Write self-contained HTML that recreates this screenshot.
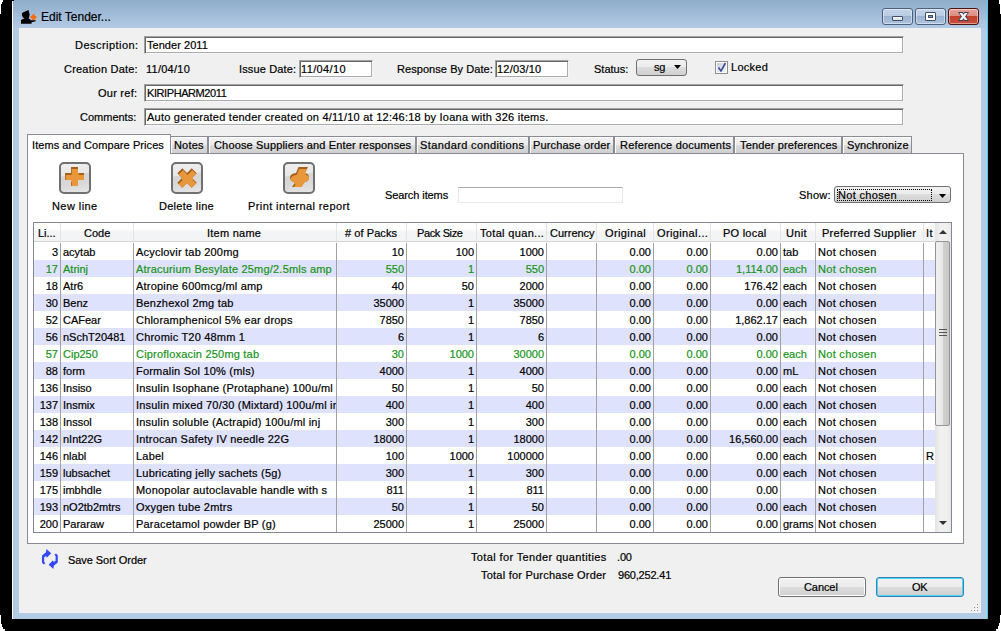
<!DOCTYPE html><html><head><meta charset="utf-8"><style>
html,body{margin:0;padding:0;}
body{width:1001px;height:631px;overflow:hidden;background:#000;position:relative;font-family:"Liberation Sans",sans-serif;}
.t{position:absolute;white-space:nowrap;}
.r{position:absolute;box-sizing:border-box;}
.in{position:absolute;box-sizing:border-box;background:#fff;border:1px solid;border-color:#a0a0a0 #f4f6fb #f4f6fb #a0a0a0;box-shadow:inset 1px 1px 0 #696969, inset -1px -1px 0 #ababab;}
.t{-webkit-text-stroke:0.2px currentColor;}
</style></head><body>

<div class="r" style="left:0px;top:0px;width:3px;height:2px;background:#fff"></div>
<div class="r" style="left:0px;top:2px;width:2px;height:2px;background:#fff"></div>
<div class="r" style="left:0px;top:4px;width:1px;height:10px;background:#fff"></div>
<div class="r" style="left:999px;top:0px;width:2px;height:4px;background:#fff"></div>
<div class="r" style="left:1000px;top:4px;width:1px;height:10px;background:#fff"></div>
<div class="r" style="left:0px;top:615px;width:1px;height:9px;background:#fff"></div>
<div class="r" style="left:0px;top:624px;width:2px;height:3px;background:#fff"></div>
<div class="r" style="left:0px;top:627px;width:3px;height:2px;background:#fff"></div>
<div class="r" style="left:0px;top:629px;width:5px;height:2px;background:#fff"></div>
<div class="r" style="left:1000px;top:615px;width:1px;height:8px;background:#fff"></div>
<div class="r" style="left:999px;top:623px;width:2px;height:3px;background:#fff"></div>
<div class="r" style="left:998px;top:626px;width:3px;height:3px;background:#fff"></div>
<div class="r" style="left:996px;top:629px;width:5px;height:2px;background:#fff"></div>
<div class="r" style="left:12px;top:1px;width:1px;height:618px;background:#fff"></div>
<div class="r" style="left:13px;top:0px;width:975px;height:619px;background:#b4cbe6"></div>
<div class="r" style="left:13px;top:0px;width:975px;height:28px;background:linear-gradient(#8facca,#b3cae5)"></div>
<div class="r" style="left:987px;top:1px;width:1px;height:618px;background:#3ad0f4"></div>
<div class="r" style="left:13px;top:0px;width:1px;height:1px;background:#000"></div>
<div class="r" style="left:19px;top:28px;width:962px;height:585px;background:#f0f0f0"></div>
<svg style="position:absolute;left:19px;top:8px" width="20" height="18" viewBox="0 0 20 18">
<path d="M3 5 L6 3.5 L9.5 2 L10 4 L10.6 6.5 L10.2 9 L9.6 10.6 L11 11.2 L12 12.3 L16.8 12.2 L16.6 13.3 L12.6 14.2 L12.6 15.8 L2 15.8 L2 12 L4 11 L5.6 10.6 L3.6 9 L3 7 Z" fill="#000"/>
<path d="M13.2 6.3 h2.6 v1.6 h1.6 v2.6 h-1.6 v1.6 h-2.6 v-1.6 h-1.6 v-2.6 h1.6 z" fill="#f86c0c"/>
</svg>
<div class="t" style="left:41px;top:10px;font-size:12px;line-height:14px;letter-spacing:0.0px;color:#000;">Edit Tender...</div>
<div class="r" style="left:882px;top:8px;width:31px;height:17px;background:linear-gradient(#c3d4e8 0%,#b8cce4 45%,#9bb3d1 50%,#adc3de 100%);border:1px solid #4e5f7a;border-radius:3px;box-shadow:inset 0 0 0 1px rgba(255,255,255,.45)"></div>
<div class="r" style="left:915px;top:8px;width:31px;height:17px;background:linear-gradient(#c3d4e8 0%,#b8cce4 45%,#9bb3d1 50%,#adc3de 100%);border:1px solid #4e5f7a;border-radius:3px;box-shadow:inset 0 0 0 1px rgba(255,255,255,.45)"></div>
<div class="r" style="left:948px;top:8px;width:31px;height:17px;background:linear-gradient(#e8a49a 0%,#dd8d82 45%,#c2402c 50%,#c7503c 100%);border:1px solid #4b1313;border-radius:3px;box-shadow:inset 0 0 0 1px rgba(255,255,255,.45)"></div>
<div class="r" style="left:892px;top:16px;width:11px;height:5px;background:linear-gradient(#fafafa,#dcdcdc);border:1px solid #3f4f66;border-radius:1px"></div>
<div class="r" style="left:925px;top:12px;width:11px;height:9px;background:#fff;border:1px solid #3f4f66;border-radius:1px"></div>
<div class="r" style="left:928px;top:15px;width:5px;height:3px;background:#7d9cc6;border:1px solid #3f4f66"></div>
<svg style="position:absolute;left:946px;top:6px" width="35" height="21" viewBox="0 0 35 21">
<path d="M12 6 L16.6 6 L17.5 7.2 L18.4 6 L23 6 L20.2 10.5 L23 15 L18.4 15 L17.5 13.8 L16.6 15 L12 15 L14.8 10.5 Z" fill="#3a3f55"/><path d="M13.3 6.9 L16.2 6.9 L17.5 8.8 L18.8 6.9 L21.7 6.9 L19 10.5 L21.7 14.1 L18.8 14.1 L17.5 12.2 L16.2 14.1 L13.3 14.1 L16 10.5 Z" fill="#f4f4f4"/>
</svg>
<div class="t" style="left:75px;top:39px;font-size:11px;line-height:13px;letter-spacing:0.455px;color:#000;">Description:</div>
<div class="in" style="left:144px;top:36px;width:760px;height:18px"></div>
<div class="t" style="left:147px;top:39px;font-size:11px;line-height:13px;letter-spacing:0.04px;color:#000;">Tender 2011</div>
<div class="t" style="left:64px;top:63px;font-size:11px;line-height:13px;letter-spacing:0.208px;color:#000;">Creation Date:</div>
<div class="t" style="left:146px;top:63px;font-size:11px;line-height:13px;letter-spacing:0.257px;color:#000;">11/04/10</div>
<div class="t" style="left:239px;top:63px;font-size:11px;line-height:13px;letter-spacing:0.15px;color:#000;">Issue Date:</div>
<div class="in" style="left:299px;top:60px;width:74px;height:18px"></div>
<div class="t" style="left:301px;top:63px;font-size:11px;line-height:13px;letter-spacing:0.371px;color:#000;">11/04/10</div>
<div class="t" style="left:397px;top:63px;font-size:11px;line-height:13px;letter-spacing:0.062px;color:#000;">Response By Date:</div>
<div class="in" style="left:495px;top:60px;width:74px;height:18px"></div>
<div class="t" style="left:497px;top:63px;font-size:11px;line-height:13px;letter-spacing:0.2px;color:#000;">12/03/10</div>
<div class="t" style="left:594px;top:63px;font-size:11px;line-height:13px;letter-spacing:0.0px;color:#000;">Status:</div>
<div class="r" style="left:636px;top:59px;width:51px;height:17px;background:linear-gradient(#f2f2f2 0%,#ebebeb 50%,#dddddd 50%,#cfcfcf 100%);border:1px solid #707070;border-radius:3px"></div>
<div class="t" style="left:654px;top:61px;font-size:11px;line-height:13px;letter-spacing:-0.2px;color:#000;">sg</div>
<svg style="position:absolute;left:674px;top:65px" width="8" height="5"><path d="M0 0H7L3.5 4Z" fill="#000"/></svg>
<div class="r" style="left:715px;top:61px;width:13px;height:13px;background:#fff;border:1px solid #8e8f8f"></div>
<div class="r" style="left:717px;top:63px;width:9px;height:9px;background:linear-gradient(135deg,#c9ced9 0%,#dfe2e8 50%,#f3f3f3 100%)"></div>
<svg style="position:absolute;left:717px;top:62px" width="10" height="11"><path d="M1.5 5.5 L4 9 L8.5 1" stroke="#3f4e9b" stroke-width="1.6" fill="none"/></svg>
<div class="t" style="left:731px;top:61px;font-size:11px;line-height:13px;letter-spacing:0.28px;color:#000;">Locked</div>
<div class="t" style="left:98px;top:87px;font-size:11px;line-height:13px;letter-spacing:0.243px;color:#000;">Our ref:</div>
<div class="in" style="left:144px;top:84px;width:760px;height:18px"></div>
<div class="t" style="left:147px;top:87px;font-size:11px;line-height:13px;letter-spacing:-0.417px;color:#000;">KIRIPHARM2011</div>
<div class="t" style="left:80px;top:111px;font-size:11px;line-height:13px;letter-spacing:0.0px;color:#000;">Comments:</div>
<div class="in" style="left:144px;top:108px;width:760px;height:18px"></div>
<div class="t" style="left:147px;top:111px;font-size:11px;line-height:13px;letter-spacing:0.237px;color:#000;">Auto generated tender created on 4/11/10 at 12:46:18 by Ioana with 326 items.</div>
<div class="r" style="left:27px;top:153px;width:937px;height:391px;background:#fff;border:1px solid #898c95"></div>
<div class="r" style="left:170px;top:136px;width:38px;height:18px;background:linear-gradient(#f2f2f2 0%,#ebebeb 50%,#dddddd 50%,#cfcfcf 100%);border:1px solid #898c95;box-shadow:inset 1px 1px 0 #fff"></div>
<div class="t" style="left:174px;top:139px;font-size:11px;line-height:13px;letter-spacing:0.175px;color:#000;">Notes</div>
<div class="r" style="left:208px;top:136px;width:208px;height:18px;background:linear-gradient(#f2f2f2 0%,#ebebeb 50%,#dddddd 50%,#cfcfcf 100%);border:1px solid #898c95;box-shadow:inset 1px 1px 0 #fff"></div>
<div class="t" style="left:214px;top:139px;font-size:11px;line-height:13px;letter-spacing:0.163px;color:#000;">Choose Suppliers and Enter responses</div>
<div class="r" style="left:416px;top:136px;width:113px;height:18px;background:linear-gradient(#f2f2f2 0%,#ebebeb 50%,#dddddd 50%,#cfcfcf 100%);border:1px solid #898c95;box-shadow:inset 1px 1px 0 #fff"></div>
<div class="t" style="left:420px;top:139px;font-size:11px;line-height:13px;letter-spacing:0.378px;color:#000;">Standard conditions</div>
<div class="r" style="left:529px;top:136px;width:85px;height:18px;background:linear-gradient(#f2f2f2 0%,#ebebeb 50%,#dddddd 50%,#cfcfcf 100%);border:1px solid #898c95;box-shadow:inset 1px 1px 0 #fff"></div>
<div class="t" style="left:533px;top:139px;font-size:11px;line-height:13px;letter-spacing:0.154px;color:#000;">Purchase order</div>
<div class="r" style="left:614px;top:136px;width:120px;height:18px;background:linear-gradient(#f2f2f2 0%,#ebebeb 50%,#dddddd 50%,#cfcfcf 100%);border:1px solid #898c95;box-shadow:inset 1px 1px 0 #fff"></div>
<div class="t" style="left:620px;top:139px;font-size:11px;line-height:13px;letter-spacing:0.183px;color:#000;">Reference documents</div>
<div class="r" style="left:734px;top:136px;width:108px;height:18px;background:linear-gradient(#f2f2f2 0%,#ebebeb 50%,#dddddd 50%,#cfcfcf 100%);border:1px solid #898c95;box-shadow:inset 1px 1px 0 #fff"></div>
<div class="t" style="left:740px;top:139px;font-size:11px;line-height:13px;letter-spacing:0.147px;color:#000;">Tender preferences</div>
<div class="r" style="left:842px;top:136px;width:70px;height:18px;background:linear-gradient(#f2f2f2 0%,#ebebeb 50%,#dddddd 50%,#cfcfcf 100%);border:1px solid #898c95;box-shadow:inset 1px 1px 0 #fff"></div>
<div class="t" style="left:847px;top:139px;font-size:11px;line-height:13px;letter-spacing:0.1px;color:#000;">Synchronize</div>
<div class="r" style="left:27px;top:134px;width:144px;height:20px;background:#fff;border:1px solid #898c95;border-bottom:none"></div>
<div class="t" style="left:32px;top:139px;font-size:11px;line-height:13px;letter-spacing:0.07px;color:#000;">Items and Compare Prices</div>
<div class="r" style="left:59px;top:162px;width:32px;height:32px;border:2px solid #707070;border-radius:5px;background:linear-gradient(172deg,#efefef 0%,#e7e7e7 38%,#d5d5d5 41%,#d9d9d9 70%,#e6e6e6 100%)"></div>
<svg style="position:absolute;left:59px;top:162px" width="32" height="32"><defs><clipPath id="c59"><path d="M12 5H19V11H25V18H19V24H12V18H6V11H12Z"/></clipPath></defs><path d="M12 5H19V11H25V18H19V24H12V18H6V11H12Z" fill="#a5621d"/><g clip-path="url(#c59)"><path d="M12 5H19V11H25V18H19V24H12V18H6V11H12Z" fill="#e8983a" transform="translate(0.7,2)"/></g></svg>
<div class="r" style="left:171px;top:162px;width:32px;height:32px;border:2px solid #707070;border-radius:5px;background:linear-gradient(172deg,#efefef 0%,#e7e7e7 38%,#d5d5d5 41%,#d9d9d9 70%,#e6e6e6 100%)"></div>
<svg style="position:absolute;left:171px;top:162px" width="32" height="32"><defs><clipPath id="c171"><path d="M6.3 11.3 L11.3 6.3 L16 11 L20.7 6.3 L25.7 11.3 L21 16 L25.7 20.7 L20.7 25.7 L16 21 L11.3 25.7 L6.3 20.7 L11 16 Z"/></clipPath></defs><path d="M6.3 11.3 L11.3 6.3 L16 11 L20.7 6.3 L25.7 11.3 L21 16 L25.7 20.7 L20.7 25.7 L16 21 L11.3 25.7 L6.3 20.7 L11 16 Z" fill="#a5621d"/><g clip-path="url(#c171)"><path d="M6.3 11.3 L11.3 6.3 L16 11 L20.7 6.3 L25.7 11.3 L21 16 L25.7 20.7 L20.7 25.7 L16 21 L11.3 25.7 L6.3 20.7 L11 16 Z" fill="#e8983a" transform="translate(0.7,2)"/></g></svg>
<div class="r" style="left:283px;top:162px;width:32px;height:32px;border:2px solid #707070;border-radius:5px;background:linear-gradient(172deg,#efefef 0%,#e7e7e7 38%,#d5d5d5 41%,#d9d9d9 70%,#e6e6e6 100%)"></div>
<svg style="position:absolute;left:283px;top:162px" width="32" height="32"><defs><clipPath id="c283"><path d="M15.5 5 L25 5 L22 11 Q26 11.5 26 15.5 Q26 19 21 20.5 L18.5 25 L9 25 L12 20.5 Q7 19.5 7 15.5 Q7 11.5 13 11 Z"/></clipPath></defs><path d="M15.5 5 L25 5 L22 11 Q26 11.5 26 15.5 Q26 19 21 20.5 L18.5 25 L9 25 L12 20.5 Q7 19.5 7 15.5 Q7 11.5 13 11 Z" fill="#a5621d"/><g clip-path="url(#c283)"><path d="M15.5 5 L25 5 L22 11 Q26 11.5 26 15.5 Q26 19 21 20.5 L18.5 25 L9 25 L12 20.5 Q7 19.5 7 15.5 Q7 11.5 13 11 Z" fill="#e8983a" transform="translate(0.7,2)"/></g></svg>
<div class="t" style="left:52px;top:200px;font-size:11px;line-height:13px;letter-spacing:0.429px;color:#000;">New line</div>
<div class="t" style="left:159px;top:200px;font-size:11px;line-height:13px;letter-spacing:0.27px;color:#000;">Delete line</div>
<div class="t" style="left:248px;top:200px;font-size:11px;line-height:13px;letter-spacing:0.4px;color:#000;">Print internal report</div>
<div class="t" style="left:385px;top:189px;font-size:11px;line-height:13px;letter-spacing:-0.091px;color:#000;">Search items</div>
<div class="r" style="left:458px;top:187px;width:165px;height:16px;background:#fff;border:1px solid #e3e9ef;border-top-color:#abadb3"></div>
<div class="t" style="left:799px;top:189px;font-size:11px;line-height:13px;letter-spacing:0.25px;color:#000;">Show:</div>
<div class="r" style="left:834px;top:186px;width:117px;height:17px;background:linear-gradient(#f2f2f2 0%,#ebebeb 50%,#dddddd 50%,#cfcfcf 100%);border:1px solid #707070;border-radius:3px"></div>
<div class="r" style="left:837px;top:189px;width:95px;height:12px;border:1px dotted #000"></div>
<div class="t" style="left:838px;top:189px;font-size:11px;line-height:13px;letter-spacing:0.333px;color:#000;">Not chosen</div>
<svg style="position:absolute;left:939px;top:194px" width="8" height="5"><path d="M0 0H7L3.5 4Z" fill="#000"/></svg>
<div class="r" style="left:33px;top:222px;width:919px;height:311px;background:#fff;border:1px solid #828790"></div>
<div class="r" style="left:34px;top:223px;width:901px;height:19px;background:linear-gradient(#ffffff 0%,#ffffff 30%,#f3f4f6 50%,#f3f4f6 100%);border-bottom:1px solid #d5d5d5"></div>
<div class="t" style="left:38px;top:227px;font-size:11px;line-height:13px;letter-spacing:-0.05px;color:#000;">Li...</div>
<div class="r" style="left:60px;top:223px;width:1px;height:18px;background:#e3e4e6"></div>
<div class="t" style="left:84px;top:227px;font-size:11px;line-height:13px;letter-spacing:0.0px;color:#000;">Code</div>
<div class="r" style="left:133px;top:223px;width:1px;height:18px;background:#e3e4e6"></div>
<div class="t" style="left:207px;top:227px;font-size:11px;line-height:13px;letter-spacing:0.25px;color:#000;">Item name</div>
<div class="r" style="left:336px;top:223px;width:1px;height:18px;background:#e3e4e6"></div>
<div class="t" style="left:345px;top:227px;font-size:11px;line-height:13px;letter-spacing:0.067px;color:#000;"># of Packs</div>
<div class="r" style="left:406px;top:223px;width:1px;height:18px;background:#e3e4e6"></div>
<div class="t" style="left:417px;top:227px;font-size:11px;line-height:13px;letter-spacing:-0.375px;color:#000;">Pack Size</div>
<div class="r" style="left:476px;top:223px;width:1px;height:18px;background:#e3e4e6"></div>
<div class="t" style="left:480px;top:227px;font-size:11px;line-height:13px;letter-spacing:0.333px;color:#000;">Total quan...</div>
<div class="r" style="left:546px;top:223px;width:1px;height:18px;background:#e3e4e6"></div>
<div class="t" style="left:550px;top:227px;font-size:11px;line-height:13px;letter-spacing:0.0px;color:#000;">Currency</div>
<div class="r" style="left:596px;top:223px;width:1px;height:18px;background:#e3e4e6"></div>
<div class="t" style="left:605px;top:227px;font-size:11px;line-height:13px;letter-spacing:0.386px;color:#000;">Original</div>
<div class="r" style="left:653px;top:223px;width:1px;height:18px;background:#e3e4e6"></div>
<div class="t" style="left:657px;top:227px;font-size:11px;line-height:13px;letter-spacing:0.38px;color:#000;">Original...</div>
<div class="r" style="left:710px;top:223px;width:1px;height:18px;background:#e3e4e6"></div>
<div class="t" style="left:723px;top:227px;font-size:11px;line-height:13px;letter-spacing:0.229px;color:#000;">PO local</div>
<div class="r" style="left:780px;top:223px;width:1px;height:18px;background:#e3e4e6"></div>
<div class="t" style="left:786px;top:227px;font-size:11px;line-height:13px;letter-spacing:0.35px;color:#000;">Unit</div>
<div class="r" style="left:815px;top:223px;width:1px;height:18px;background:#e3e4e6"></div>
<div class="t" style="left:822px;top:227px;font-size:11px;line-height:13px;letter-spacing:0.271px;color:#000;">Preferred Supplier</div>
<div class="r" style="left:923px;top:223px;width:1px;height:18px;background:#e3e4e6"></div>
<div class="t" style="left:926px;top:227px;font-size:11px;line-height:13px;letter-spacing:0.35px;color:#000;">It</div>
<div class="t" style="left:33px;width:25px;text-align:right;top:246px;font-size:11px;line-height:13px;color:#000;">3</div>
<div class="t" style="left:63px;top:246px;width:70px;overflow:hidden;font-size:11px;line-height:13px;letter-spacing:0px;color:#000">acytab</div>
<div class="t" style="left:136px;top:246px;width:200px;overflow:hidden;font-size:11px;line-height:13px;letter-spacing:0.2px;color:#000">Acyclovir tab 200mg</div>
<div class="t" style="left:336px;width:68px;text-align:right;top:246px;font-size:11px;line-height:13px;color:#000;">10</div>
<div class="t" style="left:406px;width:68px;text-align:right;top:246px;font-size:11px;line-height:13px;color:#000;">100</div>
<div class="t" style="left:476px;width:68px;text-align:right;top:246px;font-size:11px;line-height:13px;color:#000;">1000</div>
<div class="t" style="left:596px;width:55px;text-align:right;top:246px;font-size:11px;line-height:13px;color:#000;">0.00</div>
<div class="t" style="left:653px;width:55px;text-align:right;top:246px;font-size:11px;line-height:13px;color:#000;">0.00</div>
<div class="t" style="left:710px;width:68px;text-align:right;top:246px;font-size:11px;line-height:13px;color:#000;">0.00</div>
<div class="t" style="left:783px;top:246px;width:32px;overflow:hidden;font-size:11px;line-height:13px;letter-spacing:0px;color:#000">tab</div>
<div class="t" style="left:818px;top:246px;width:105px;overflow:hidden;font-size:11px;line-height:13px;letter-spacing:0.3px;color:#000">Not chosen</div>
<div class="r" style="left:34px;top:260px;width:901px;height:17px;background:#dfe2fc"></div>
<div class="t" style="left:33px;width:25px;text-align:right;top:263px;font-size:11px;line-height:13px;color:#169418;">17</div>
<div class="t" style="left:63px;top:263px;width:70px;overflow:hidden;font-size:11px;line-height:13px;letter-spacing:0px;color:#169418">Atrinj</div>
<div class="t" style="left:136px;top:263px;width:200px;overflow:hidden;font-size:11px;line-height:13px;letter-spacing:0.2px;color:#169418">Atracurium Besylate 25mg/2.5mls amp</div>
<div class="t" style="left:336px;width:68px;text-align:right;top:263px;font-size:11px;line-height:13px;color:#169418;">550</div>
<div class="t" style="left:406px;width:68px;text-align:right;top:263px;font-size:11px;line-height:13px;color:#169418;">1</div>
<div class="t" style="left:476px;width:68px;text-align:right;top:263px;font-size:11px;line-height:13px;color:#169418;">550</div>
<div class="t" style="left:596px;width:55px;text-align:right;top:263px;font-size:11px;line-height:13px;color:#169418;">0.00</div>
<div class="t" style="left:653px;width:55px;text-align:right;top:263px;font-size:11px;line-height:13px;color:#169418;">0.00</div>
<div class="t" style="left:710px;width:68px;text-align:right;top:263px;font-size:11px;line-height:13px;color:#169418;">1,114.00</div>
<div class="t" style="left:783px;top:263px;width:32px;overflow:hidden;font-size:11px;line-height:13px;letter-spacing:0px;color:#169418">each</div>
<div class="t" style="left:818px;top:263px;width:105px;overflow:hidden;font-size:11px;line-height:13px;letter-spacing:0.3px;color:#169418">Not chosen</div>
<div class="t" style="left:33px;width:25px;text-align:right;top:280px;font-size:11px;line-height:13px;color:#000;">18</div>
<div class="t" style="left:63px;top:280px;width:70px;overflow:hidden;font-size:11px;line-height:13px;letter-spacing:0px;color:#000">Atr6</div>
<div class="t" style="left:136px;top:280px;width:200px;overflow:hidden;font-size:11px;line-height:13px;letter-spacing:0.2px;color:#000">Atropine 600mcg/ml amp</div>
<div class="t" style="left:336px;width:68px;text-align:right;top:280px;font-size:11px;line-height:13px;color:#000;">40</div>
<div class="t" style="left:406px;width:68px;text-align:right;top:280px;font-size:11px;line-height:13px;color:#000;">50</div>
<div class="t" style="left:476px;width:68px;text-align:right;top:280px;font-size:11px;line-height:13px;color:#000;">2000</div>
<div class="t" style="left:596px;width:55px;text-align:right;top:280px;font-size:11px;line-height:13px;color:#000;">0.00</div>
<div class="t" style="left:653px;width:55px;text-align:right;top:280px;font-size:11px;line-height:13px;color:#000;">0.00</div>
<div class="t" style="left:710px;width:68px;text-align:right;top:280px;font-size:11px;line-height:13px;color:#000;">176.42</div>
<div class="t" style="left:783px;top:280px;width:32px;overflow:hidden;font-size:11px;line-height:13px;letter-spacing:0px;color:#000">each</div>
<div class="t" style="left:818px;top:280px;width:105px;overflow:hidden;font-size:11px;line-height:13px;letter-spacing:0.3px;color:#000">Not chosen</div>
<div class="r" style="left:34px;top:294px;width:901px;height:17px;background:#dfe2fc"></div>
<div class="t" style="left:33px;width:25px;text-align:right;top:297px;font-size:11px;line-height:13px;color:#000;">30</div>
<div class="t" style="left:63px;top:297px;width:70px;overflow:hidden;font-size:11px;line-height:13px;letter-spacing:0px;color:#000">Benz</div>
<div class="t" style="left:136px;top:297px;width:200px;overflow:hidden;font-size:11px;line-height:13px;letter-spacing:0.2px;color:#000">Benzhexol 2mg tab</div>
<div class="t" style="left:336px;width:68px;text-align:right;top:297px;font-size:11px;line-height:13px;color:#000;">35000</div>
<div class="t" style="left:406px;width:68px;text-align:right;top:297px;font-size:11px;line-height:13px;color:#000;">1</div>
<div class="t" style="left:476px;width:68px;text-align:right;top:297px;font-size:11px;line-height:13px;color:#000;">35000</div>
<div class="t" style="left:596px;width:55px;text-align:right;top:297px;font-size:11px;line-height:13px;color:#000;">0.00</div>
<div class="t" style="left:653px;width:55px;text-align:right;top:297px;font-size:11px;line-height:13px;color:#000;">0.00</div>
<div class="t" style="left:710px;width:68px;text-align:right;top:297px;font-size:11px;line-height:13px;color:#000;">0.00</div>
<div class="t" style="left:783px;top:297px;width:32px;overflow:hidden;font-size:11px;line-height:13px;letter-spacing:0px;color:#000">each</div>
<div class="t" style="left:818px;top:297px;width:105px;overflow:hidden;font-size:11px;line-height:13px;letter-spacing:0.3px;color:#000">Not chosen</div>
<div class="t" style="left:33px;width:25px;text-align:right;top:314px;font-size:11px;line-height:13px;color:#000;">52</div>
<div class="t" style="left:63px;top:314px;width:70px;overflow:hidden;font-size:11px;line-height:13px;letter-spacing:0px;color:#000">CAFear</div>
<div class="t" style="left:136px;top:314px;width:200px;overflow:hidden;font-size:11px;line-height:13px;letter-spacing:0.2px;color:#000">Chloramphenicol 5% ear drops</div>
<div class="t" style="left:336px;width:68px;text-align:right;top:314px;font-size:11px;line-height:13px;color:#000;">7850</div>
<div class="t" style="left:406px;width:68px;text-align:right;top:314px;font-size:11px;line-height:13px;color:#000;">1</div>
<div class="t" style="left:476px;width:68px;text-align:right;top:314px;font-size:11px;line-height:13px;color:#000;">7850</div>
<div class="t" style="left:596px;width:55px;text-align:right;top:314px;font-size:11px;line-height:13px;color:#000;">0.00</div>
<div class="t" style="left:653px;width:55px;text-align:right;top:314px;font-size:11px;line-height:13px;color:#000;">0.00</div>
<div class="t" style="left:710px;width:68px;text-align:right;top:314px;font-size:11px;line-height:13px;color:#000;">1,862.17</div>
<div class="t" style="left:783px;top:314px;width:32px;overflow:hidden;font-size:11px;line-height:13px;letter-spacing:0px;color:#000">each</div>
<div class="t" style="left:818px;top:314px;width:105px;overflow:hidden;font-size:11px;line-height:13px;letter-spacing:0.3px;color:#000">Not chosen</div>
<div class="r" style="left:34px;top:328px;width:901px;height:17px;background:#dfe2fc"></div>
<div class="t" style="left:33px;width:25px;text-align:right;top:331px;font-size:11px;line-height:13px;color:#000;">56</div>
<div class="t" style="left:63px;top:331px;width:70px;overflow:hidden;font-size:11px;line-height:13px;letter-spacing:0px;color:#000">nSchT20481</div>
<div class="t" style="left:136px;top:331px;width:200px;overflow:hidden;font-size:11px;line-height:13px;letter-spacing:0.2px;color:#000">Chromic T20 48mm 1</div>
<div class="t" style="left:336px;width:68px;text-align:right;top:331px;font-size:11px;line-height:13px;color:#000;">6</div>
<div class="t" style="left:406px;width:68px;text-align:right;top:331px;font-size:11px;line-height:13px;color:#000;">1</div>
<div class="t" style="left:476px;width:68px;text-align:right;top:331px;font-size:11px;line-height:13px;color:#000;">6</div>
<div class="t" style="left:596px;width:55px;text-align:right;top:331px;font-size:11px;line-height:13px;color:#000;">0.00</div>
<div class="t" style="left:653px;width:55px;text-align:right;top:331px;font-size:11px;line-height:13px;color:#000;">0.00</div>
<div class="t" style="left:710px;width:68px;text-align:right;top:331px;font-size:11px;line-height:13px;color:#000;">0.00</div>
<div class="t" style="left:818px;top:331px;width:105px;overflow:hidden;font-size:11px;line-height:13px;letter-spacing:0.3px;color:#000">Not chosen</div>
<div class="t" style="left:33px;width:25px;text-align:right;top:348px;font-size:11px;line-height:13px;color:#169418;">57</div>
<div class="t" style="left:63px;top:348px;width:70px;overflow:hidden;font-size:11px;line-height:13px;letter-spacing:0px;color:#169418">Cip250</div>
<div class="t" style="left:136px;top:348px;width:200px;overflow:hidden;font-size:11px;line-height:13px;letter-spacing:0.2px;color:#169418">Ciprofloxacin 250mg tab</div>
<div class="t" style="left:336px;width:68px;text-align:right;top:348px;font-size:11px;line-height:13px;color:#169418;">30</div>
<div class="t" style="left:406px;width:68px;text-align:right;top:348px;font-size:11px;line-height:13px;color:#169418;">1000</div>
<div class="t" style="left:476px;width:68px;text-align:right;top:348px;font-size:11px;line-height:13px;color:#169418;">30000</div>
<div class="t" style="left:596px;width:55px;text-align:right;top:348px;font-size:11px;line-height:13px;color:#169418;">0.00</div>
<div class="t" style="left:653px;width:55px;text-align:right;top:348px;font-size:11px;line-height:13px;color:#169418;">0.00</div>
<div class="t" style="left:710px;width:68px;text-align:right;top:348px;font-size:11px;line-height:13px;color:#169418;">0.00</div>
<div class="t" style="left:783px;top:348px;width:32px;overflow:hidden;font-size:11px;line-height:13px;letter-spacing:0px;color:#169418">each</div>
<div class="t" style="left:818px;top:348px;width:105px;overflow:hidden;font-size:11px;line-height:13px;letter-spacing:0.3px;color:#169418">Not chosen</div>
<div class="r" style="left:34px;top:362px;width:901px;height:17px;background:#dfe2fc"></div>
<div class="t" style="left:33px;width:25px;text-align:right;top:365px;font-size:11px;line-height:13px;color:#000;">88</div>
<div class="t" style="left:63px;top:365px;width:70px;overflow:hidden;font-size:11px;line-height:13px;letter-spacing:0px;color:#000">form</div>
<div class="t" style="left:136px;top:365px;width:200px;overflow:hidden;font-size:11px;line-height:13px;letter-spacing:0.2px;color:#000">Formalin Sol 10% (mls)</div>
<div class="t" style="left:336px;width:68px;text-align:right;top:365px;font-size:11px;line-height:13px;color:#000;">4000</div>
<div class="t" style="left:406px;width:68px;text-align:right;top:365px;font-size:11px;line-height:13px;color:#000;">1</div>
<div class="t" style="left:476px;width:68px;text-align:right;top:365px;font-size:11px;line-height:13px;color:#000;">4000</div>
<div class="t" style="left:596px;width:55px;text-align:right;top:365px;font-size:11px;line-height:13px;color:#000;">0.00</div>
<div class="t" style="left:653px;width:55px;text-align:right;top:365px;font-size:11px;line-height:13px;color:#000;">0.00</div>
<div class="t" style="left:710px;width:68px;text-align:right;top:365px;font-size:11px;line-height:13px;color:#000;">0.00</div>
<div class="t" style="left:783px;top:365px;width:32px;overflow:hidden;font-size:11px;line-height:13px;letter-spacing:0px;color:#000">mL</div>
<div class="t" style="left:818px;top:365px;width:105px;overflow:hidden;font-size:11px;line-height:13px;letter-spacing:0.3px;color:#000">Not chosen</div>
<div class="t" style="left:33px;width:25px;text-align:right;top:382px;font-size:11px;line-height:13px;color:#000;">136</div>
<div class="t" style="left:63px;top:382px;width:70px;overflow:hidden;font-size:11px;line-height:13px;letter-spacing:0px;color:#000">Insiso</div>
<div class="t" style="left:136px;top:382px;width:200px;overflow:hidden;font-size:11px;line-height:13px;letter-spacing:0.2px;color:#000">Insulin Isophane (Protaphane) 100u/ml</div>
<div class="t" style="left:336px;width:68px;text-align:right;top:382px;font-size:11px;line-height:13px;color:#000;">50</div>
<div class="t" style="left:406px;width:68px;text-align:right;top:382px;font-size:11px;line-height:13px;color:#000;">1</div>
<div class="t" style="left:476px;width:68px;text-align:right;top:382px;font-size:11px;line-height:13px;color:#000;">50</div>
<div class="t" style="left:596px;width:55px;text-align:right;top:382px;font-size:11px;line-height:13px;color:#000;">0.00</div>
<div class="t" style="left:653px;width:55px;text-align:right;top:382px;font-size:11px;line-height:13px;color:#000;">0.00</div>
<div class="t" style="left:710px;width:68px;text-align:right;top:382px;font-size:11px;line-height:13px;color:#000;">0.00</div>
<div class="t" style="left:783px;top:382px;width:32px;overflow:hidden;font-size:11px;line-height:13px;letter-spacing:0px;color:#000">each</div>
<div class="t" style="left:818px;top:382px;width:105px;overflow:hidden;font-size:11px;line-height:13px;letter-spacing:0.3px;color:#000">Not chosen</div>
<div class="r" style="left:34px;top:396px;width:901px;height:17px;background:#dfe2fc"></div>
<div class="t" style="left:33px;width:25px;text-align:right;top:399px;font-size:11px;line-height:13px;color:#000;">137</div>
<div class="t" style="left:63px;top:399px;width:70px;overflow:hidden;font-size:11px;line-height:13px;letter-spacing:0px;color:#000">Insmix</div>
<div class="t" style="left:136px;top:399px;width:200px;overflow:hidden;font-size:11px;line-height:13px;letter-spacing:0.2px;color:#000">Insulin mixed 70/30 (Mixtard) 100u/ml inj</div>
<div class="t" style="left:336px;width:68px;text-align:right;top:399px;font-size:11px;line-height:13px;color:#000;">400</div>
<div class="t" style="left:406px;width:68px;text-align:right;top:399px;font-size:11px;line-height:13px;color:#000;">1</div>
<div class="t" style="left:476px;width:68px;text-align:right;top:399px;font-size:11px;line-height:13px;color:#000;">400</div>
<div class="t" style="left:596px;width:55px;text-align:right;top:399px;font-size:11px;line-height:13px;color:#000;">0.00</div>
<div class="t" style="left:653px;width:55px;text-align:right;top:399px;font-size:11px;line-height:13px;color:#000;">0.00</div>
<div class="t" style="left:710px;width:68px;text-align:right;top:399px;font-size:11px;line-height:13px;color:#000;">0.00</div>
<div class="t" style="left:783px;top:399px;width:32px;overflow:hidden;font-size:11px;line-height:13px;letter-spacing:0px;color:#000">each</div>
<div class="t" style="left:818px;top:399px;width:105px;overflow:hidden;font-size:11px;line-height:13px;letter-spacing:0.3px;color:#000">Not chosen</div>
<div class="t" style="left:33px;width:25px;text-align:right;top:416px;font-size:11px;line-height:13px;color:#000;">138</div>
<div class="t" style="left:63px;top:416px;width:70px;overflow:hidden;font-size:11px;line-height:13px;letter-spacing:0px;color:#000">Inssol</div>
<div class="t" style="left:136px;top:416px;width:200px;overflow:hidden;font-size:11px;line-height:13px;letter-spacing:0.2px;color:#000">Insulin soluble (Actrapid) 100u/ml inj</div>
<div class="t" style="left:336px;width:68px;text-align:right;top:416px;font-size:11px;line-height:13px;color:#000;">300</div>
<div class="t" style="left:406px;width:68px;text-align:right;top:416px;font-size:11px;line-height:13px;color:#000;">1</div>
<div class="t" style="left:476px;width:68px;text-align:right;top:416px;font-size:11px;line-height:13px;color:#000;">300</div>
<div class="t" style="left:596px;width:55px;text-align:right;top:416px;font-size:11px;line-height:13px;color:#000;">0.00</div>
<div class="t" style="left:653px;width:55px;text-align:right;top:416px;font-size:11px;line-height:13px;color:#000;">0.00</div>
<div class="t" style="left:710px;width:68px;text-align:right;top:416px;font-size:11px;line-height:13px;color:#000;">0.00</div>
<div class="t" style="left:783px;top:416px;width:32px;overflow:hidden;font-size:11px;line-height:13px;letter-spacing:0px;color:#000">each</div>
<div class="t" style="left:818px;top:416px;width:105px;overflow:hidden;font-size:11px;line-height:13px;letter-spacing:0.3px;color:#000">Not chosen</div>
<div class="r" style="left:34px;top:430px;width:901px;height:17px;background:#dfe2fc"></div>
<div class="t" style="left:33px;width:25px;text-align:right;top:433px;font-size:11px;line-height:13px;color:#000;">142</div>
<div class="t" style="left:63px;top:433px;width:70px;overflow:hidden;font-size:11px;line-height:13px;letter-spacing:0px;color:#000">nInt22G</div>
<div class="t" style="left:136px;top:433px;width:200px;overflow:hidden;font-size:11px;line-height:13px;letter-spacing:0.2px;color:#000">Introcan Safety IV needle 22G</div>
<div class="t" style="left:336px;width:68px;text-align:right;top:433px;font-size:11px;line-height:13px;color:#000;">18000</div>
<div class="t" style="left:406px;width:68px;text-align:right;top:433px;font-size:11px;line-height:13px;color:#000;">1</div>
<div class="t" style="left:476px;width:68px;text-align:right;top:433px;font-size:11px;line-height:13px;color:#000;">18000</div>
<div class="t" style="left:596px;width:55px;text-align:right;top:433px;font-size:11px;line-height:13px;color:#000;">0.00</div>
<div class="t" style="left:653px;width:55px;text-align:right;top:433px;font-size:11px;line-height:13px;color:#000;">0.00</div>
<div class="t" style="left:710px;width:68px;text-align:right;top:433px;font-size:11px;line-height:13px;color:#000;">16,560.00</div>
<div class="t" style="left:783px;top:433px;width:32px;overflow:hidden;font-size:11px;line-height:13px;letter-spacing:0px;color:#000">each</div>
<div class="t" style="left:818px;top:433px;width:105px;overflow:hidden;font-size:11px;line-height:13px;letter-spacing:0.3px;color:#000">Not chosen</div>
<div class="t" style="left:33px;width:25px;text-align:right;top:450px;font-size:11px;line-height:13px;color:#000;">146</div>
<div class="t" style="left:63px;top:450px;width:70px;overflow:hidden;font-size:11px;line-height:13px;letter-spacing:0px;color:#000">nlabl</div>
<div class="t" style="left:136px;top:450px;width:200px;overflow:hidden;font-size:11px;line-height:13px;letter-spacing:0.2px;color:#000">Label</div>
<div class="t" style="left:336px;width:68px;text-align:right;top:450px;font-size:11px;line-height:13px;color:#000;">100</div>
<div class="t" style="left:406px;width:68px;text-align:right;top:450px;font-size:11px;line-height:13px;color:#000;">1000</div>
<div class="t" style="left:476px;width:68px;text-align:right;top:450px;font-size:11px;line-height:13px;color:#000;">100000</div>
<div class="t" style="left:596px;width:55px;text-align:right;top:450px;font-size:11px;line-height:13px;color:#000;">0.00</div>
<div class="t" style="left:653px;width:55px;text-align:right;top:450px;font-size:11px;line-height:13px;color:#000;">0.00</div>
<div class="t" style="left:710px;width:68px;text-align:right;top:450px;font-size:11px;line-height:13px;color:#000;">0.00</div>
<div class="t" style="left:783px;top:450px;width:32px;overflow:hidden;font-size:11px;line-height:13px;letter-spacing:0px;color:#000">each</div>
<div class="t" style="left:818px;top:450px;width:105px;overflow:hidden;font-size:11px;line-height:13px;letter-spacing:0.3px;color:#000">Not chosen</div>
<div class="t" style="left:926px;top:450px;width:9px;overflow:hidden;font-size:11px;line-height:13px;letter-spacing:0px;color:#000">R</div>
<div class="r" style="left:34px;top:464px;width:901px;height:17px;background:#dfe2fc"></div>
<div class="t" style="left:33px;width:25px;text-align:right;top:467px;font-size:11px;line-height:13px;color:#000;">159</div>
<div class="t" style="left:63px;top:467px;width:70px;overflow:hidden;font-size:11px;line-height:13px;letter-spacing:0px;color:#000">lubsachet</div>
<div class="t" style="left:136px;top:467px;width:200px;overflow:hidden;font-size:11px;line-height:13px;letter-spacing:0.2px;color:#000">Lubricating jelly sachets (5g)</div>
<div class="t" style="left:336px;width:68px;text-align:right;top:467px;font-size:11px;line-height:13px;color:#000;">300</div>
<div class="t" style="left:406px;width:68px;text-align:right;top:467px;font-size:11px;line-height:13px;color:#000;">1</div>
<div class="t" style="left:476px;width:68px;text-align:right;top:467px;font-size:11px;line-height:13px;color:#000;">300</div>
<div class="t" style="left:596px;width:55px;text-align:right;top:467px;font-size:11px;line-height:13px;color:#000;">0.00</div>
<div class="t" style="left:653px;width:55px;text-align:right;top:467px;font-size:11px;line-height:13px;color:#000;">0.00</div>
<div class="t" style="left:710px;width:68px;text-align:right;top:467px;font-size:11px;line-height:13px;color:#000;">0.00</div>
<div class="t" style="left:783px;top:467px;width:32px;overflow:hidden;font-size:11px;line-height:13px;letter-spacing:0px;color:#000">each</div>
<div class="t" style="left:818px;top:467px;width:105px;overflow:hidden;font-size:11px;line-height:13px;letter-spacing:0.3px;color:#000">Not chosen</div>
<div class="t" style="left:33px;width:25px;text-align:right;top:484px;font-size:11px;line-height:13px;color:#000;">175</div>
<div class="t" style="left:63px;top:484px;width:70px;overflow:hidden;font-size:11px;line-height:13px;letter-spacing:0px;color:#000">imbhdle</div>
<div class="t" style="left:136px;top:484px;width:200px;overflow:hidden;font-size:11px;line-height:13px;letter-spacing:0.2px;color:#000">Monopolar autoclavable handle with s</div>
<div class="t" style="left:336px;width:68px;text-align:right;top:484px;font-size:11px;line-height:13px;color:#000;">811</div>
<div class="t" style="left:406px;width:68px;text-align:right;top:484px;font-size:11px;line-height:13px;color:#000;">1</div>
<div class="t" style="left:476px;width:68px;text-align:right;top:484px;font-size:11px;line-height:13px;color:#000;">811</div>
<div class="t" style="left:596px;width:55px;text-align:right;top:484px;font-size:11px;line-height:13px;color:#000;">0.00</div>
<div class="t" style="left:653px;width:55px;text-align:right;top:484px;font-size:11px;line-height:13px;color:#000;">0.00</div>
<div class="t" style="left:710px;width:68px;text-align:right;top:484px;font-size:11px;line-height:13px;color:#000;">0.00</div>
<div class="t" style="left:818px;top:484px;width:105px;overflow:hidden;font-size:11px;line-height:13px;letter-spacing:0.3px;color:#000">Not chosen</div>
<div class="r" style="left:34px;top:498px;width:901px;height:17px;background:#dfe2fc"></div>
<div class="t" style="left:33px;width:25px;text-align:right;top:501px;font-size:11px;line-height:13px;color:#000;">193</div>
<div class="t" style="left:63px;top:501px;width:70px;overflow:hidden;font-size:11px;line-height:13px;letter-spacing:0px;color:#000">nO2tb2mtrs</div>
<div class="t" style="left:136px;top:501px;width:200px;overflow:hidden;font-size:11px;line-height:13px;letter-spacing:0.2px;color:#000">Oxygen tube 2mtrs</div>
<div class="t" style="left:336px;width:68px;text-align:right;top:501px;font-size:11px;line-height:13px;color:#000;">50</div>
<div class="t" style="left:406px;width:68px;text-align:right;top:501px;font-size:11px;line-height:13px;color:#000;">1</div>
<div class="t" style="left:476px;width:68px;text-align:right;top:501px;font-size:11px;line-height:13px;color:#000;">50</div>
<div class="t" style="left:596px;width:55px;text-align:right;top:501px;font-size:11px;line-height:13px;color:#000;">0.00</div>
<div class="t" style="left:653px;width:55px;text-align:right;top:501px;font-size:11px;line-height:13px;color:#000;">0.00</div>
<div class="t" style="left:710px;width:68px;text-align:right;top:501px;font-size:11px;line-height:13px;color:#000;">0.00</div>
<div class="t" style="left:783px;top:501px;width:32px;overflow:hidden;font-size:11px;line-height:13px;letter-spacing:0px;color:#000">each</div>
<div class="t" style="left:818px;top:501px;width:105px;overflow:hidden;font-size:11px;line-height:13px;letter-spacing:0.3px;color:#000">Not chosen</div>
<div class="t" style="left:33px;width:25px;text-align:right;top:518px;font-size:11px;line-height:13px;color:#000;">200</div>
<div class="t" style="left:63px;top:518px;width:70px;overflow:hidden;font-size:11px;line-height:13px;letter-spacing:0px;color:#000">Pararaw</div>
<div class="t" style="left:136px;top:518px;width:200px;overflow:hidden;font-size:11px;line-height:13px;letter-spacing:0.2px;color:#000">Paracetamol powder BP (g)</div>
<div class="t" style="left:336px;width:68px;text-align:right;top:518px;font-size:11px;line-height:13px;color:#000;">25000</div>
<div class="t" style="left:406px;width:68px;text-align:right;top:518px;font-size:11px;line-height:13px;color:#000;">1</div>
<div class="t" style="left:476px;width:68px;text-align:right;top:518px;font-size:11px;line-height:13px;color:#000;">25000</div>
<div class="t" style="left:596px;width:55px;text-align:right;top:518px;font-size:11px;line-height:13px;color:#000;">0.00</div>
<div class="t" style="left:653px;width:55px;text-align:right;top:518px;font-size:11px;line-height:13px;color:#000;">0.00</div>
<div class="t" style="left:710px;width:68px;text-align:right;top:518px;font-size:11px;line-height:13px;color:#000;">0.00</div>
<div class="t" style="left:783px;top:518px;width:32px;overflow:hidden;font-size:11px;line-height:13px;letter-spacing:0px;color:#000">grams</div>
<div class="t" style="left:818px;top:518px;width:105px;overflow:hidden;font-size:11px;line-height:13px;letter-spacing:0.3px;color:#000">Not chosen</div>
<div class="r" style="left:60px;top:243px;width:1px;height:289px;background:#a0a0a0"></div>
<div class="r" style="left:133px;top:243px;width:1px;height:289px;background:#a0a0a0"></div>
<div class="r" style="left:336px;top:243px;width:1px;height:289px;background:#a0a0a0"></div>
<div class="r" style="left:406px;top:243px;width:1px;height:289px;background:#a0a0a0"></div>
<div class="r" style="left:476px;top:243px;width:1px;height:289px;background:#a0a0a0"></div>
<div class="r" style="left:546px;top:243px;width:1px;height:289px;background:#a0a0a0"></div>
<div class="r" style="left:596px;top:243px;width:1px;height:289px;background:#a0a0a0"></div>
<div class="r" style="left:653px;top:243px;width:1px;height:289px;background:#a0a0a0"></div>
<div class="r" style="left:710px;top:243px;width:1px;height:289px;background:#a0a0a0"></div>
<div class="r" style="left:780px;top:243px;width:1px;height:289px;background:#a0a0a0"></div>
<div class="r" style="left:815px;top:243px;width:1px;height:289px;background:#a0a0a0"></div>
<div class="r" style="left:923px;top:243px;width:1px;height:289px;background:#a0a0a0"></div>
<div class="r" style="left:935px;top:223px;width:16px;height:309px;background:linear-gradient(90deg,#e3e3e3,#f0f0f0 30%,#f0f0f0 70%,#e8e8e8)"></div>
<svg style="position:absolute;left:939px;top:229px" width="9" height="6"><path d="M0 5H8L4 1Z" fill="#333"/></svg>
<svg style="position:absolute;left:939px;top:520px" width="9" height="6"><path d="M0 1H8L4 5Z" fill="#333"/></svg>
<div class="r" style="left:935px;top:241px;width:15px;height:185px;background:linear-gradient(90deg,#f0f0f0 0%,#e8e8e8 50%,#d0d0d0 51%,#c8c8c8 100%);border:1px solid #959595;border-radius:2px"></div>
<div class="r" style="left:939px;top:329px;width:8px;height:1px;background:#555"></div>
<div class="r" style="left:939px;top:332px;width:8px;height:1px;background:#555"></div>
<div class="r" style="left:939px;top:335px;width:8px;height:1px;background:#555"></div>
<svg style="position:absolute;left:36px;top:545px" width="28" height="28" viewBox="0 0 28 28">
<g fill="#3448fb"><path id="ua" d="M10.4 4 L15.2 8.3 L10.8 12.8 L10.2 11 L8.2 12.2 L8.2 17 L9.4 18.2 L7.8 19.6 L6 17.8 L6 10.6 L10 7.2 Z"/>
<path d="M10.4 4 L15.2 8.3 L10.8 12.8 L10.2 11 L8.2 12.2 L8.2 17 L9.4 18.2 L7.8 19.6 L6 17.8 L6 10.6 L10 7.2 Z" transform="rotate(180 13.9 14)"/></g>
</svg>
<div class="t" style="left:68px;top:554px;font-size:11px;line-height:13px;letter-spacing:-0.057px;color:#000;">Save Sort Order</div>
<div class="t" style="left:471px;top:551px;font-size:11px;line-height:13px;letter-spacing:0.365px;color:#000;">Total for Tender quantities</div>
<div class="t" style="left:617px;top:551px;font-size:11px;line-height:13px;letter-spacing:-0.15px;color:#000;">.00</div>
<div class="t" style="left:481px;top:569px;font-size:11px;line-height:13px;letter-spacing:0.226px;color:#000;">Total for Purchase Order</div>
<div class="t" style="left:618px;top:569px;font-size:11px;line-height:13px;letter-spacing:-0.2px;color:#000;">960,252.41</div>
<div class="r" style="left:778px;top:577px;width:88px;height:20px;background:linear-gradient(#f2f2f2 0%,#ebebeb 50%,#dddddd 50%,#cfcfcf 100%);border:1px solid #707070;border-radius:3px;box-shadow:inset 0 0 0 1px #fff"></div>
<div class="t" style="left:804px;top:581px;font-size:11px;line-height:13px;letter-spacing:-0.08px;color:#000;">Cancel</div>
<div class="r" style="left:876px;top:577px;width:88px;height:20px;background:linear-gradient(#f2f2f2 0%,#ebebeb 50%,#dddddd 50%,#cfcfcf 100%);border:1px solid #3c7fb1;border-radius:3px;box-shadow:inset 0 0 0 1px #48d8fb"></div>
<div class="t" style="left:912px;top:581px;font-size:11px;line-height:13px;letter-spacing:-0.35px;color:#000;">OK</div>
<div class="r" style="left:976px;top:603px;width:1px;height:1px;background:#fff"></div>
<div class="r" style="left:977px;top:604px;width:1px;height:1px;background:#8a8a8a"></div>
<div class="r" style="left:973px;top:606px;width:1px;height:1px;background:#fff"></div>
<div class="r" style="left:974px;top:607px;width:1px;height:1px;background:#8a8a8a"></div>
<div class="r" style="left:976px;top:606px;width:1px;height:1px;background:#fff"></div>
<div class="r" style="left:977px;top:607px;width:1px;height:1px;background:#8a8a8a"></div>
<div class="r" style="left:970px;top:609px;width:1px;height:1px;background:#fff"></div>
<div class="r" style="left:971px;top:610px;width:1px;height:1px;background:#8a8a8a"></div>
<div class="r" style="left:973px;top:609px;width:1px;height:1px;background:#fff"></div>
<div class="r" style="left:974px;top:610px;width:1px;height:1px;background:#8a8a8a"></div>
<div class="r" style="left:976px;top:609px;width:1px;height:1px;background:#fff"></div>
<div class="r" style="left:977px;top:610px;width:1px;height:1px;background:#8a8a8a"></div>
</body></html>
